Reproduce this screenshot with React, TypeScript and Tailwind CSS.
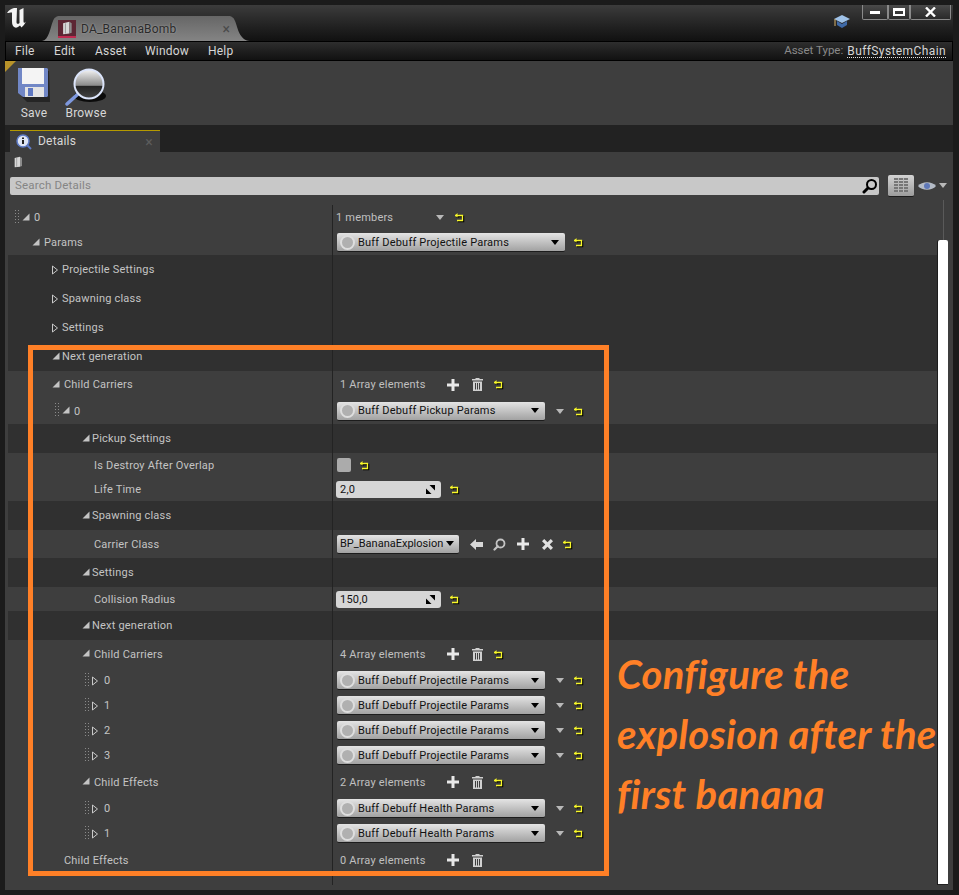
import type { ReactNode } from 'react';

function ResetIcon() {
  return (
    <svg width="11" height="11" viewBox="0 0 11 11" className="shrink-0" aria-hidden="true">
      <path d="M1 3.500h7.500v5H3" fill="none" stroke="#000" strokeWidth="1.500" transform="translate(1 1)" />
      <path d="M3.500 1 1 3.500 3.500 5z" fill="#000" transform="translate(1 1)" />
      <path d="M1 3.500h7.500v5H3" fill="none" stroke="#f7f72a" strokeWidth="1.300" />
      <path d="M3.500 1 1 3.500 3.500 5.500z" fill="#f7f72a" />
    </svg>
  );
}

function Caret({ color = 'border-t-[#b8b8b8]' }: { color?: string }) {
  return <span className={`w-0 h-0 border-x-[4px] border-x-transparent border-t-[5px] ${color}`} />;
}

function PlusIcon() {
  return (
    <svg width="12" height="12" viewBox="0 0 12 12" aria-hidden="true">
      <path d="M4.500 0h3v4.500H12v3H7.500V12h-3V7.500H0v-3h4.500z" fill="#e8e8e8" />
    </svg>
  );
}

function TrashIcon() {
  return (
    <svg width="11" height="13" viewBox="0 0 11 13" aria-hidden="true">
      <path d="M3.500 1V0h4v1H11v1.500H0V1z" fill="#d0d0d0" />
      <path d="M1 3.500h9V13H1zM3 5v6.500h1V5zm2 0v6.500h1V5zm2 0v6.500h1V5z" fill="#d0d0d0" fillRule="evenodd" />
    </svg>
  );
}

function SmallSearch({ color = '#c4c4c4' }: { color?: string }) {
  return (
    <svg width="13" height="13" viewBox="0 0 13 13" aria-hidden="true">
      <circle cx="7.500" cy="5.500" r="4" fill="none" stroke={color} strokeWidth="1.800" />
      <path d="M4.800 8.300 1.500 11.500" stroke={color} strokeWidth="2.200" strokeLinecap="round" />
    </svg>
  );
}

function ResizeHandle() {
  return (
    <svg width="9" height="9" viewBox="0 0 9 9" aria-hidden="true">
      <path d="M3.500 0H9v5.500z" fill="#000" />
      <path d="M0 3.500V9h5.500z" fill="#000" />
    </svg>
  );
}

function Grip() {
  return (
    <span className="flex w-[7px] shrink-0 gap-[2px] -translate-y-[1px]">
      <span className="h-[14px] w-px bg-[repeating-linear-gradient(180deg,#8a8a8a_0,#8a8a8a_1px,transparent_1px,transparent_3px)]" />
      <span className="h-[14px] w-px bg-[repeating-linear-gradient(180deg,#8a8a8a_0,#8a8a8a_1px,transparent_1px,transparent_3px)]" />
    </span>
  );
}

function Expanded() {
  return (
    <svg width="8" height="8" viewBox="0 0 8 8" className="shrink-0 -translate-y-[1px]" aria-hidden="true">
      <path d="M7.500 .5v7H.5z" fill="#c4c4c4" />
    </svg>
  );
}

function Collapsed() {
  return (
    <svg width="8" height="10" viewBox="0 0 8 10" className="shrink-0 -translate-x-[1px]" aria-hidden="true">
      <path d="M1.500 1v8l5-4z" fill="none" stroke="#c8c8c8" strokeWidth="1" />
    </svg>
  );
}

function StructDropdown({ label, width }: { label: string; width: string }) {
  return (
    <div className={`${width} h-[19px] ml-[4px] shrink-0 flex items-center rounded-[2px] border-b border-[#1c1c1c] bg-gradient-to-b from-[#e4e4e4] to-[#a2a2a2] text-[#111] pl-[3px] pr-[6px]`}>
      <span className="w-[15px] h-[15px] rounded-full border-2 border-[#dedede] bg-[#b0b0b0] shrink-0" />
      <span className="ml-[3px] flex-1 whitespace-nowrap">{label}</span>
      <Caret color="border-t-[#000]" />
    </div>
  );
}

function NumberField({ value }: { value: string }) {
  return (
    <div className="ml-[3px] w-[105px] h-[17px] shrink-0 rounded-[3px] bg-[#d6d6d6] text-[#111] flex items-center justify-between pl-[4px] pr-[6px]">
      <span>{value}</span>
      <ResizeHandle />
    </div>
  );
}

function ArrayCount({ label }: { label: string }) {
  return (
    <div className="flex items-center text-[#c0c0c0]">
      <span className="ml-[7px] w-[107px] whitespace-nowrap">{label}</span>
      <PlusIcon />
      <span className="ml-[13px]"><TrashIcon /></span>
    </div>
  );
}

function StructValue({ label, width, gap, caret }: { label: string; width: string; gap: string; caret?: boolean }) {
  return (
    <div className="flex items-center">
      <StructDropdown label={label} width={width} />
      {caret && <span className="ml-[11px] flex"><Caret /></span>}
      <span className={`${gap} flex`}><ResetIcon /></span>
    </div>
  );
}

type RowData = {
  label: string;
  pad: string;
  height: string;
  band: 'light' | 'dark';
  arrow?: 'open' | 'closed';
  grip?: boolean;
  wide?: boolean;
  value?: ReactNode;
};

const projectile = <StructValue label="Buff Debuff Projectile Params" width="w-[208px]" gap="ml-[9px]" caret />;
const health = <StructValue label="Buff Debuff Health Params" width="w-[208px]" gap="ml-[9px]" caret />;

const rows: RowData[] = [
  {
    label: '0', pad: 'pl-[7px]', height: 'h-[25px]', band: 'light', arrow: 'open', grip: true, wide: true,
    value: (
      <div className="flex items-center text-[#c0c0c0]">
        <span className="ml-[3px] w-[100px]">1 members</span>
        <Caret />
        <span className="ml-[10px] flex"><ResetIcon /></span>
      </div>
    ),
  },
  {
    label: 'Params', pad: 'pl-[24px]', height: 'h-[25px]', band: 'light', arrow: 'open', wide: true,
    value: <StructValue label="Buff Debuff Projectile Params" width="w-[228px]" gap="ml-[8px]" />,
  },
  { label: 'Projectile Settings', pad: 'pl-[44px]', height: 'h-[29px]', band: 'dark', arrow: 'closed' },
  { label: 'Spawning class', pad: 'pl-[44px]', height: 'h-[29px]', band: 'dark', arrow: 'closed' },
  { label: 'Settings', pad: 'pl-[44px]', height: 'h-[29px]', band: 'dark', arrow: 'closed' },
  { label: 'Next generation', pad: 'pl-[44px]', height: 'h-[29px]', band: 'dark', arrow: 'open' },
  {
    label: 'Child Carriers', pad: 'pl-[44px]', height: 'h-[27px]', band: 'light', arrow: 'open', wide: true,
    value: (
      <div className="flex items-center">
        <ArrayCount label="1 Array elements" />
        <span className="ml-[10px] flex"><ResetIcon /></span>
      </div>
    ),
  },
  {
    label: '0', pad: 'pl-[47px]', height: 'h-[26px]', band: 'light', arrow: 'open', grip: true, wide: true,
    value: <StructValue label="Buff Debuff Pickup Params" width="w-[208px]" gap="ml-[9px]" caret />,
  },
  { label: 'Pickup Settings', pad: 'pl-[74px]', height: 'h-[29px]', band: 'dark', arrow: 'open' },
  {
    label: 'Is Destroy After Overlap', pad: 'pl-[86px]', height: 'h-[24px]', band: 'light',
    value: (
      <div className="flex items-center">
        <span className="ml-[4px] w-[14px] h-[14px] rounded-[2px] bg-[#ababab]" />
        <span className="ml-[8px] flex"><ResetIcon /></span>
      </div>
    ),
  },
  {
    label: 'Life Time', pad: 'pl-[86px]', height: 'h-[24px]', band: 'light',
    value: (
      <div className="flex items-center">
        <NumberField value="2,0" />
        <span className="ml-[8px] flex"><ResetIcon /></span>
      </div>
    ),
  },
  { label: 'Spawning class', pad: 'pl-[74px]', height: 'h-[29px]', band: 'dark', arrow: 'open' },
  {
    label: 'Carrier Class', pad: 'pl-[86px]', height: 'h-[28px]', band: 'light',
    value: (
      <div className="flex items-center">
        <div className="ml-[4px] w-[122px] h-[19px] flex items-center justify-between rounded-[2px] border-b border-[#1c1c1c] bg-gradient-to-b from-[#e4e4e4] to-[#a2a2a2] text-[#111] pl-[3px] pr-[5px] tracking-normal">
          <span className="whitespace-nowrap">BP_BananaExplosion</span>
          <Caret color="border-t-[#000]" />
        </div>
        <svg width="13" height="11" viewBox="0 0 13 11" className="ml-[11px]" aria-hidden="true">
          <path d="M6 0v3h7v5H6v3L0 5.500z" fill="#d8d8d8" />
        </svg>
        <span className="ml-[10px] flex"><SmallSearch /></span>
        <span className="ml-[11px] flex"><PlusIcon /></span>
        <svg width="11" height="11" viewBox="0 0 11 11" className="ml-[13px]" aria-hidden="true">
          <path d="M2.200 0 5.500 3.300 8.800 0 11 2.200 7.700 5.500 11 8.800 8.800 11 5.500 7.700 2.200 11 0 8.800 3.300 5.500 0 2.200z" fill="#e0e0e0" />
        </svg>
        <span className="ml-[9px] flex"><ResetIcon /></span>
      </div>
    ),
  },
  { label: 'Settings', pad: 'pl-[74px]', height: 'h-[29px]', band: 'dark', arrow: 'open' },
  {
    label: 'Collision Radius', pad: 'pl-[86px]', height: 'h-[24px]', band: 'light',
    value: (
      <div className="flex items-center">
        <NumberField value="150,0" />
        <span className="ml-[8px] flex"><ResetIcon /></span>
      </div>
    ),
  },
  { label: 'Next generation', pad: 'pl-[74px]', height: 'h-[29px]', band: 'dark', arrow: 'open' },
  {
    label: 'Child Carriers', pad: 'pl-[74px]', height: 'h-[28px]', band: 'light', arrow: 'open', wide: true,
    value: (
      <div className="flex items-center">
        <ArrayCount label="4 Array elements" />
        <span className="ml-[10px] flex"><ResetIcon /></span>
      </div>
    ),
  },
  { label: '0', pad: 'pl-[77px]', height: 'h-[25px]', band: 'light', arrow: 'closed', grip: true, wide: true, value: projectile },
  { label: '1', pad: 'pl-[77px]', height: 'h-[25px]', band: 'light', arrow: 'closed', grip: true, wide: true, value: projectile },
  { label: '2', pad: 'pl-[77px]', height: 'h-[25px]', band: 'light', arrow: 'closed', grip: true, wide: true, value: projectile },
  { label: '3', pad: 'pl-[77px]', height: 'h-[25px]', band: 'light', arrow: 'closed', grip: true, wide: true, value: projectile },
  {
    label: 'Child Effects', pad: 'pl-[74px]', height: 'h-[28px]', band: 'light', arrow: 'open', wide: true,
    value: (
      <div className="flex items-center">
        <ArrayCount label="2 Array elements" />
        <span className="ml-[10px] flex"><ResetIcon /></span>
      </div>
    ),
  },
  { label: '0', pad: 'pl-[77px]', height: 'h-[25px]', band: 'light', arrow: 'closed', grip: true, wide: true, value: health },
  { label: '1', pad: 'pl-[77px]', height: 'h-[25px]', band: 'light', arrow: 'closed', grip: true, wide: true, value: health },
  {
    label: 'Child Effects', pad: 'pl-[56px]', height: 'h-[28px]', band: 'light',
    value: <ArrayCount label="0 Array elements" />,
  },
];

function Row({ row }: { row: RowData }) {
  const bg = row.band === 'dark' ? 'bg-[#303030]' : 'bg-[#3e3e3e]';
  return (
    <div className={`flex items-center ${row.height} ${bg}`}>
      <div className={`w-[324px] h-full shrink-0 flex items-center ${row.pad} text-[#c4c4c4]`}>
        {row.grip && <Grip />}
        {row.arrow && (
          <span className={`${row.wide ? 'w-[12px]' : 'w-[10px]'} flex shrink-0`}>
            {row.arrow === 'open' ? <Expanded /> : <Collapsed />}
          </span>
        )}
        <span className="whitespace-nowrap">{row.label}</span>
      </div>
      <div className="h-full flex items-center border-l border-[#232323]">{row.value}</div>
    </div>
  );
}

function UnrealLogo() {
  return (
    <svg width="20" height="20" viewBox="0 0 20 20" aria-hidden="true">
      <path
        d="M0 5C2 2 4 1 7 0L10 0 9.500 14C9.500 16 11 16.500 12.500 15L12.500 2 16.500 0 16.500 13C16.500 15 17.500 15.500 19 13.500 18 16 16 18 14.500 19.500L13 17.500C11.500 19 9.500 20 8 19.500 5.500 18.500 5 16 5 13L5 4.500C3 4.500 1.500 5 0 5z"
        fill="#f4f4f4"
      />
    </svg>
  );
}

function AssetIcon({ size }: { size: number }) {
  return (
    <svg width={size} height={size} viewBox="0 0 16 18" aria-hidden="true">
      <path d="M3 3 11 1v15l-8 1z" fill="#d8d8d8" />
      <path d="M11 1l3 2v12l-3 1z" fill="#8c8c8c" />
      <path d="M6 3v13" stroke="#8a8a8a" strokeWidth="1" />
    </svg>
  );
}

function SaveIcon() {
  return (
    <svg width="34" height="34" viewBox="0 0 34 34" aria-hidden="true">
      <path d="M4 3h27l1 31H9L4 29z" fill="#111" opacity=".55" transform="translate(1 0)" />
      <path d="M1 0h29l1 1v27l-1 1H6l-5-4z" fill="#7187c6" />
      <path d="M5 0h22v16H5z" fill="#f4f4f4" />
      <path d="M8 19h19v10H8z" fill="#e4e4e4" />
      <path d="M11 20h5v8h-5z" fill="#5f78c2" />
    </svg>
  );
}

function BrowseIcon() {
  return (
    <svg width="42" height="38" viewBox="0 0 42 38" aria-hidden="true">
      <defs>
        <linearGradient id="lens" x1="0" y1="0" x2="0" y2="1">
          <stop offset="0" stopColor="#f4f4f4" />
          <stop offset=".55" stopColor="#8a8a8a" />
          <stop offset=".56" stopColor="#222" />
          <stop offset="1" stopColor="#444" />
        </linearGradient>
      </defs>
      <ellipse cx="25" cy="28" rx="16" ry="6" fill="#0b0b0b" />
      <path d="M2 36 13 26" stroke="#7d97dd" strokeWidth="3.500" strokeLinecap="round" />
      <circle cx="24" cy="16" r="14.500" fill="url(#lens)" stroke="#dbe4fa" strokeWidth="2" />
    </svg>
  );
}

function WindowButton({ width, children }: { width: string; children: ReactNode }) {
  return (
    <div className={`${width} h-[15px] flex items-center justify-center border border-[#8a8a8a] border-t-0 bg-gradient-to-b from-[#4a4a4a] to-[#2a2a2a] rounded-b-[2px]`}>
      {children}
    </div>
  );
}

export default function App() {
  return (
    <div className="relative w-[959px] h-[895px] overflow-hidden bg-[#1b1b1b] p-[5px] pb-[5px] pr-[6px] font-['Roboto',sans-serif] text-[11px] leading-none tracking-[.2px]">
      <div className="flex flex-col h-full bg-[#3e3e3e]">
        {/* Title bar */}
        <div className="relative h-[36px] shrink-0 flex items-end bg-gradient-to-b from-[#3c3c3c] to-[#111]">
          <div className="absolute left-[2px] top-[3px]"><UnrealLogo /></div>
          <div className="relative ml-[37px] w-[208px] h-[25px] flex items-center pl-[16px]">
            <svg width="208" height="25" viewBox="0 0 208 25" className="absolute inset-0" aria-hidden="true">
              <defs>
                <linearGradient id="tabFill" x1="0" y1="0" x2="0" y2="1">
                  <stop offset="0" stopColor="#666" />
                  <stop offset="1" stopColor="#848484" />
                </linearGradient>
              </defs>
              <path d="M0 25C7 24 8 12 11 5 12 2 14 0 18 0H186C190 0 192 2 193 5 196 12 197 24 208 25z" fill="url(#tabFill)" />
            </svg>
            <div className="relative w-[18px] h-[18px] bg-[#5d2634] border-b-2 border-[#c02a50] flex items-center justify-center">
              <AssetIcon size={14} />
            </div>
            <span className="relative ml-[5px] text-[12px] text-[#2a2a2a] [text-shadow:0_0_2px_#aaa]">DA_BananaBomb</span>
            <span className="relative ml-[46px] text-[#4a4a4a] text-[14px]">×</span>
          </div>
          <svg width="16" height="16" viewBox="0 0 16 16" className="absolute left-[829px] top-[9px]" aria-hidden="true">
            <path d="M8 1 16 5 8 9 0 5z" fill="#9fc2e8" />
            <path d="M3 7v4l5 3 5-3V7L8 10z" fill="#3f6aa8" />
            <path d="M1 5v7" stroke="#d9b36c" strokeWidth="1" />
          </svg>
          <div className="absolute right-[2px] top-0 flex">
            <WindowButton width="w-[26px]"><span className="w-[10px] h-[3px] bg-white" /></WindowButton>
            <WindowButton width="w-[22px]"><span className="w-[12px] h-[8px] border-2 border-t-[3px] border-white" /></WindowButton>
            <WindowButton width="w-[41px]">
              <svg width="11" height="10" viewBox="0 0 11 10" aria-hidden="true">
                <path d="M1 .5 10 9.500M10 .5 1 9.500" stroke="#fff" strokeWidth="2.400" />
              </svg>
            </WindowButton>
          </div>
        </div>

        {/* Menu bar */}
        <div className="h-[20px] shrink-0 flex items-center border border-black bg-gradient-to-b from-[#2e2e2e] to-[#111] pl-[9px] pr-[6px] text-[12px] text-[#d6d6d6]">
          <span className="w-[39px]">File</span>
          <span className="w-[41px]">Edit</span>
          <span className="w-[50px]">Asset</span>
          <span className="w-[63px]">Window</span>
          <span>Help</span>
          <span className="ml-auto text-[11.5px] tracking-normal text-[#8a8a8a]">Asset Type:</span>
          <span className="ml-[4px] tracking-[.4px] text-[#d6d6d6] border-b border-dotted border-[#e0e0e0]">BuffSystemChain</span>
        </div>

        {/* Toolbar */}
        <div className="relative h-[64px] shrink-0 flex bg-[#3e3e3e] pt-[7px] text-[12px] text-[#d8d8d8]">
          <div className="absolute left-0 top-0 w-0 h-0 border-t-[11px] border-r-[11px] border-t-[#b8932a] border-r-transparent" />
          <div className="ml-[13px] w-[32px] flex flex-col items-center">
            <SaveIcon />
            <span className="mt-[5px]">Save</span>
          </div>
          <div className="ml-[13px] w-[46px] flex flex-col items-center">
            <BrowseIcon />
            <span className="mt-[1px]">Browse</span>
          </div>
        </div>

        {/* Tab strip */}
        <div className="h-[27px] shrink-0 flex items-end bg-[#222] pl-[5px]">
          <div className="w-[150px] h-[22px] flex items-center bg-[#3e3e3e] border-t border-[#b59a00] pl-[6px] text-[12px] text-[#d8d8d8]">
            <svg width="16" height="16" viewBox="0 0 16 16" aria-hidden="true">
              <circle cx="7" cy="7" r="6" fill="#dfe6f5" stroke="#5f7cc8" strokeWidth="1.500" />
              <path d="M11 11l4 4" stroke="#5f7cc8" strokeWidth="2" />
              <path d="M6 3.500h2V5H6zM6 6h2v4H6z" fill="#222" />
            </svg>
            <span className="ml-[6px] -translate-y-[1px]">Details</span>
            <span className="ml-auto mr-[7px] text-[#5c5c5c] text-[14px]">×</span>
          </div>
        </div>

        {/* Details panel */}
        <div className="relative flex-1 min-h-0 bg-[#3e3e3e]">
          <div className="h-[20px] flex items-center pl-[7px]"><AssetIcon size={12} /></div>
          <div className="flex items-center h-[26px] pl-[5px] pt-[1px]">
            <div className="w-[869px] h-[18px] flex items-center justify-between rounded-[2px] bg-[#c8c8c8] pl-[5px] pr-[1px] text-[11.5px] text-[#858585]">
              <span>Search Details</span>
              <svg width="16" height="16" viewBox="0 0 16 16" aria-hidden="true">
                <circle cx="9.500" cy="6.500" r="4.500" fill="none" stroke="#000" strokeWidth="2" />
                <path d="M6 10 2 14" stroke="#000" strokeWidth="3" strokeLinecap="round" />
              </svg>
            </div>
            <div className="ml-[9px] w-[26px] h-[22px] flex items-center justify-center rounded-[2px] border-b border-[#1c1c1c] bg-gradient-to-b from-[#d4d4d4] to-[#9c9c9c]">
              <svg width="14" height="14" viewBox="0 0 14 14" aria-hidden="true">
                <path d="M0 0h14v2H0zM0 3h14v2H0zM0 6h14v2H0zM0 9h14v2H0zM0 12h14v2H0z" fill="#777" />
                <path d="M4.500 0v14M9.500 0v14" stroke="#b6b6b6" strokeWidth="1" />
              </svg>
            </div>
            <svg width="18" height="10" viewBox="0 0 18 10" className="ml-[4px]" aria-hidden="true">
              <path d="M0 5C4 0 14 0 18 5 14 10 4 10 0 5z" fill="#b4bbc6" />
              <circle cx="9" cy="5" r="3" fill="#5f78b8" />
            </svg>
            <span className="ml-[3px] flex"><Caret /></span>
          </div>

          <div className="ml-[3px] mt-[7px] w-[929px]">
            {rows.map((row, i) => (
              <Row key={i} row={row} />
            ))}
            <div className="ml-[324px] h-[11px] border-l border-[#232323]" />
          </div>

          {/* Scrollbar */}
          <div className="absolute left-[933px] top-[88px] bottom-[5px] w-[10px] bg-white rounded-t-[2px] border-b border-[#222] shadow-[-1px_0_0_#1c1c1c]" />
          <div className="absolute left-[938px] top-[48px] h-[40px] w-px bg-[#5a5a5a]" />
        </div>
      </div>

      {/* Annotation */}
      <div className="absolute left-[28px] top-[345px] w-[581px] h-[531px] border-[5px] border-[#ff8027]" />
      <div className="absolute left-[617px] top-[644px] w-[330px] font-['Lato',sans-serif] font-bold italic text-[40px] leading-[60px] text-[#ff8027] tracking-[.3px] whitespace-nowrap">
        <div>Configure the</div>
        <div>explosion after the</div>
        <div>first banana</div>
      </div>
    </div>
  );
}
